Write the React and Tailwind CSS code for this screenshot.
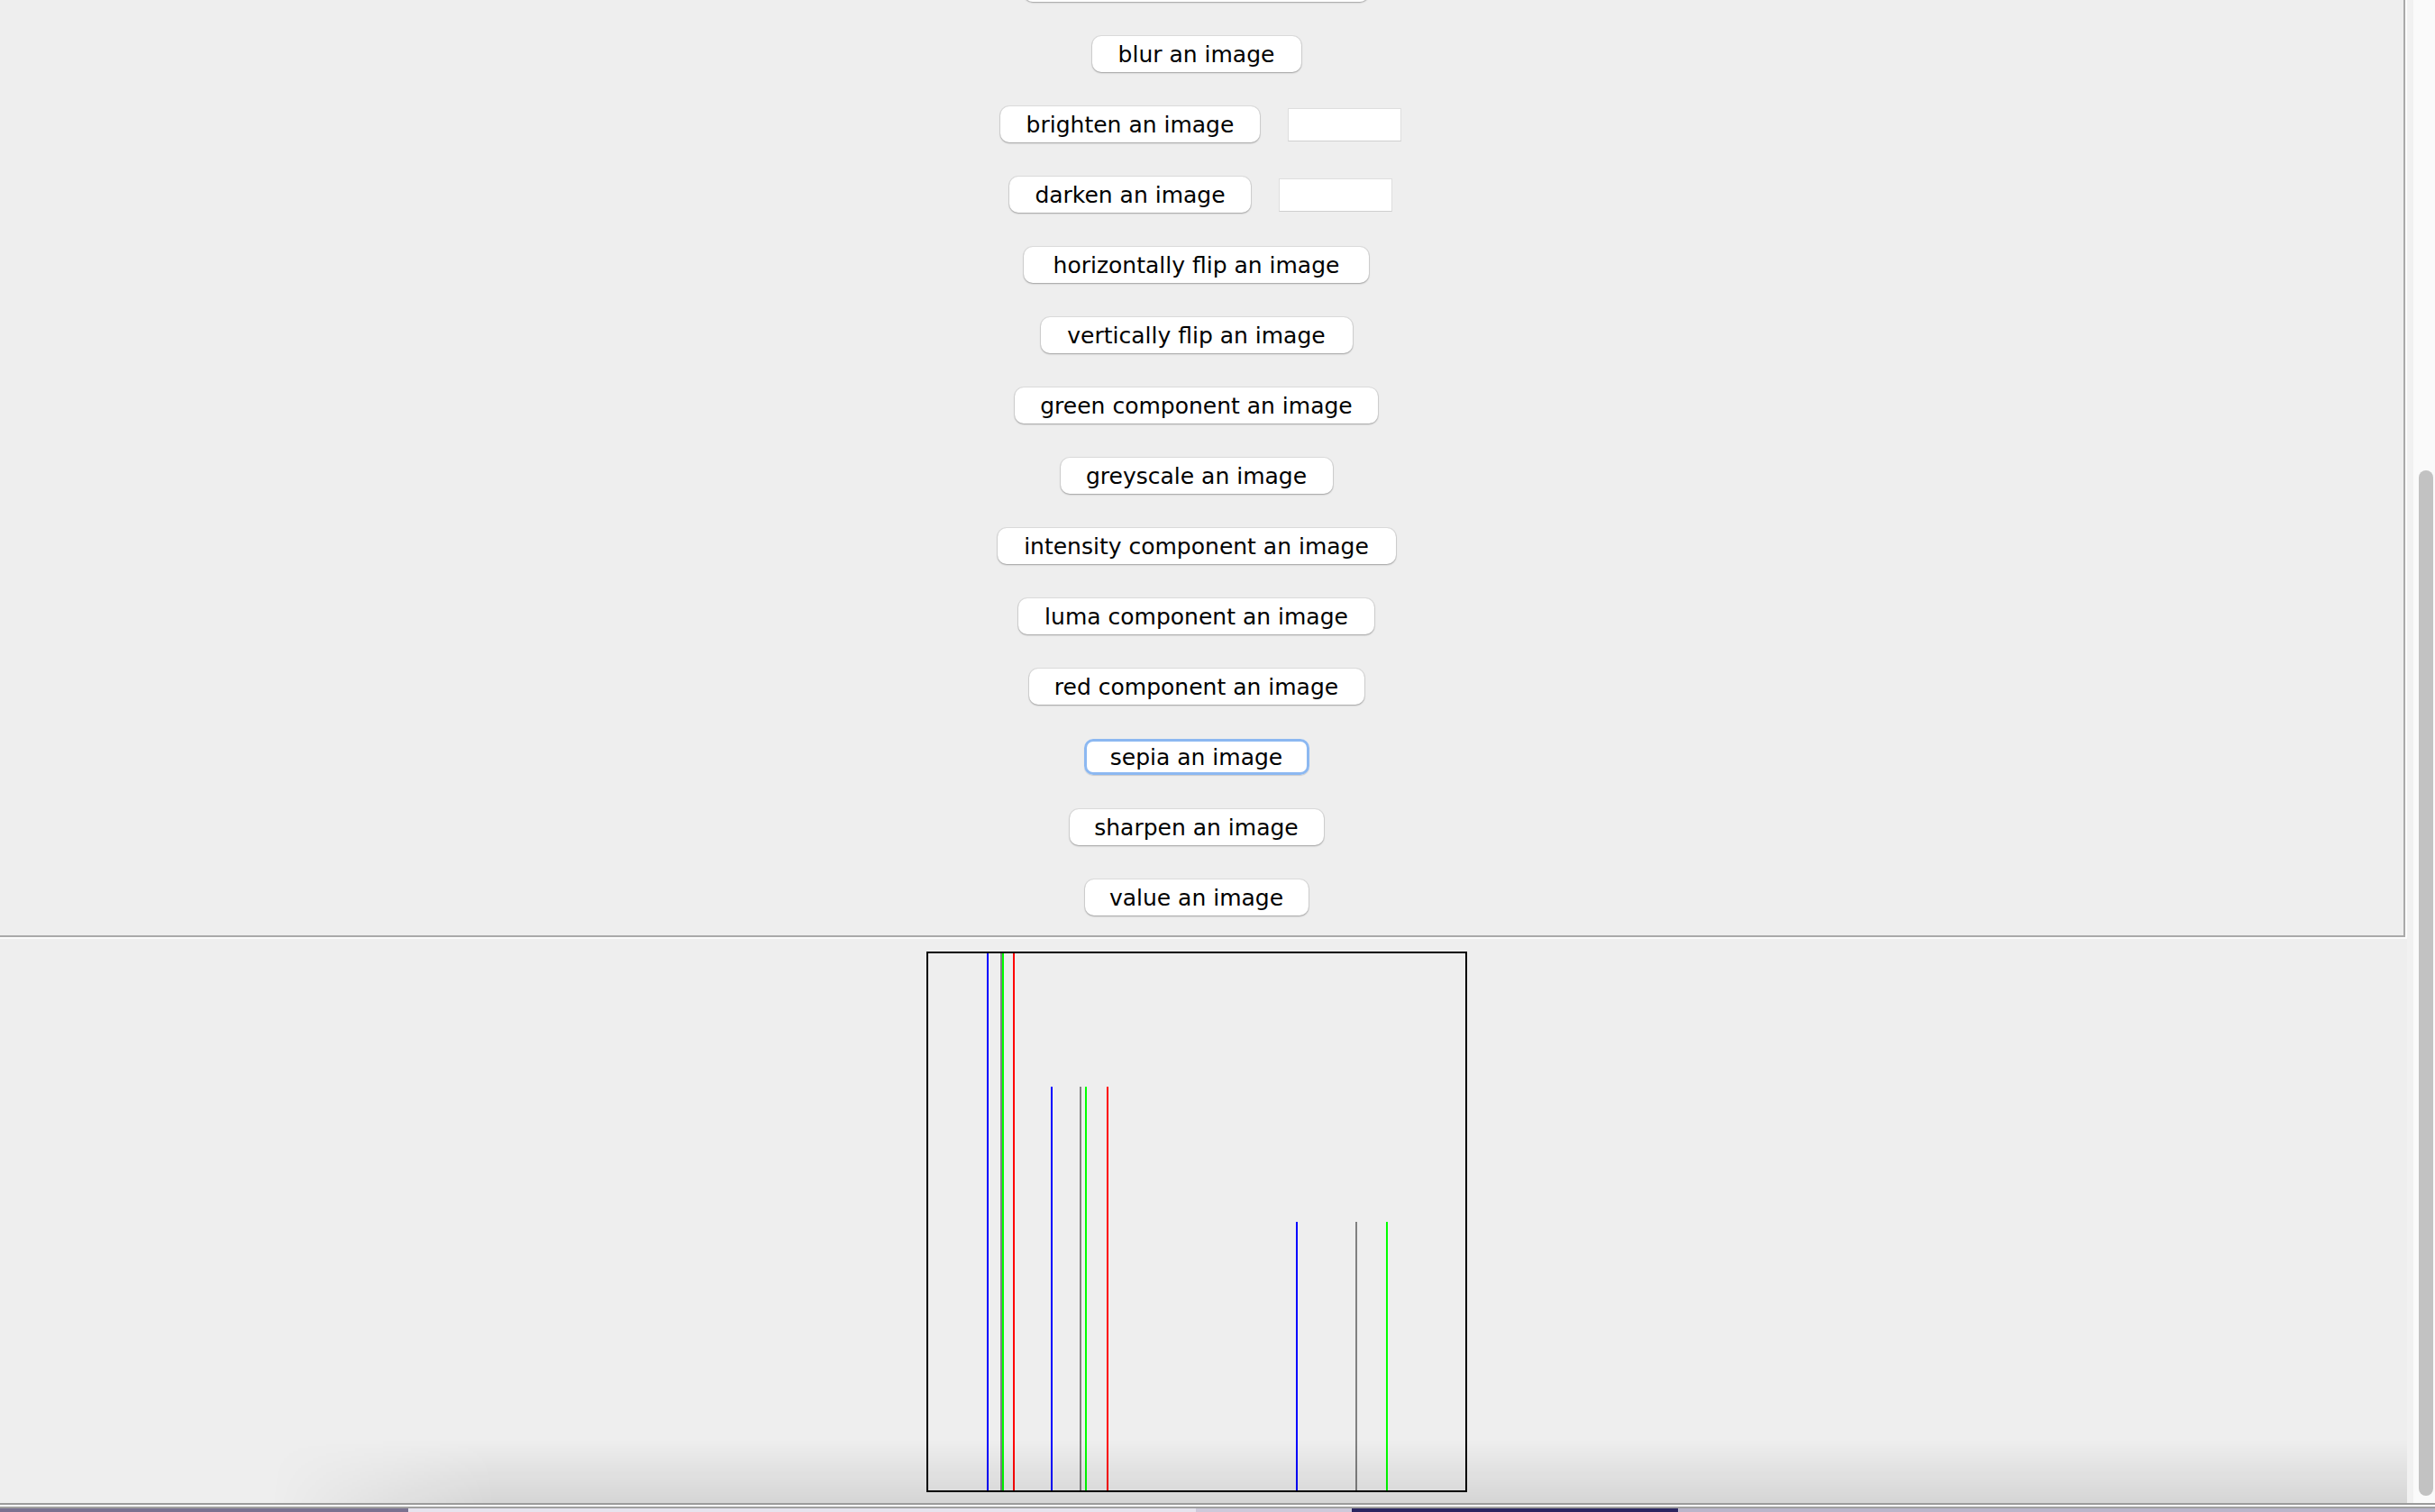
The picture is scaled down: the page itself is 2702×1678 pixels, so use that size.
import React from "react";

// Filter buttons, in the order they appear in the scroll pane.
// The first one sits above the visible area (scrolled off).
const FILTERS = [
  { label: "load an image", w: "w-[383px]" },
  { label: "blur an image", w: "w-[232px]" },
  { label: "brighten an image", w: "w-[288px]", field: true },
  { label: "darken an image", w: "w-[268px]", field: true },
  { label: "horizontally flip an image", w: "w-[383px]" },
  { label: "vertically flip an image", w: "w-[346px]" },
  { label: "green component an image", w: "w-[403px]" },
  { label: "greyscale an image", w: "w-[302px]" },
  { label: "intensity component an image", w: "w-[442px]" },
  { label: "luma component an image", w: "w-[395px]" },
  { label: "red component an image", w: "w-[372px]" },
  { label: "sepia an image", w: "w-[250px]", focused: true },
  { label: "sharpen an image", w: "w-[282px]" },
  { label: "value an image", w: "w-[248px]" },
];

// histogram lines: x inside the plot, top offset, colour
const BARS = [
  { x: 65, top: 0, c: "#0000ff" },
  { x: 80, top: 0, c: "#808080" },
  { x: 82, top: 0, c: "#00ff00" },
  { x: 94, top: 0, c: "#ff0000" },
  { x: 136, top: 148, c: "#0000ff" },
  { x: 168, top: 148, c: "#808080" },
  { x: 174, top: 148, c: "#00ff00" },
  { x: 198, top: 148, c: "#ff0000" },
  { x: 408, top: 298, c: "#0000ff" },
  { x: 474, top: 298, c: "#808080" },
  { x: 508, top: 298, c: "#00ff00" },
];

function AquaButton({ label, w, focused }) {
  return (
    <button
      className={`${w} h-[40px] shrink-0 rounded-[10px] bg-white text-[25px] leading-none text-black ${
        focused
          ? "shadow-[inset_0_0_0_3px_#8cb8f1,0_1px_1px_rgba(0,0,0,0.15)]"
          : "shadow-[0_0_0_1px_rgba(0,0,0,0.07),0_1px_2px_rgba(0,0,0,0.28)]"
      }`}
    >
      {label}
    </button>
  );
}

function Histogram() {
  return (
    <div className="w-[600px] h-[600px] border-2 border-black">
      <svg width="596" height="596" viewBox="0 0 596 596">
        {BARS.map((b, i) => (
          <rect key={i} x={b.x} y={b.top} width="2" height={596 - b.top} fill={b.c} />
        ))}
      </svg>
    </div>
  );
}

export default function App() {
  return (
    <div
      className="w-[2702px] h-[1678px] overflow-hidden bg-[#eeeeee] flex flex-col"
      style={{ fontFamily: '"DejaVu Sans", "Liberation Sans", sans-serif' }}
    >
      <div className="relative flex h-[1668px]">
        <div className="w-[2671px] flex flex-col">
          {/* buttons panel, etched border on the right and bottom */}
          <div className="border-r-2 border-b-2 border-[#fbfbfb]">
            <div className="h-[1040px] overflow-hidden border-r-2 border-b-2 border-[#a9a9a9]">
              <div className="-mt-[38px] pr-[12px] flex flex-col items-center gap-[38px]">
                {FILTERS.map((f) =>
                  f.field ? (
                    <div key={f.label} className="flex items-center pl-[10px]">
                      <AquaButton {...f} />
                      <div className="ml-[31px] w-[126px] h-[37px] bg-white border border-[#dedede] border-b-[#cfcfcf]" />
                    </div>
                  ) : (
                    <AquaButton key={f.label} {...f} />
                  )
                )}
              </div>
            </div>
          </div>

          <div className="mt-[14px] pr-[15px] flex justify-center">
            <Histogram />
          </div>
        </div>

        {/* vertical scroll bar */}
        <div className="w-[31px] flex">
          <div className="w-[7px] bg-[#f1f1f1]" />
          <div className="flex-1 bg-[#fafafa] pl-[6px]">
            <div className="mt-[522px] w-[16px] h-[1138px] rounded-full bg-[#c2c2c2]" />
          </div>
        </div>

        {/* shadow of the window underneath */}
        <div className="pointer-events-none absolute bottom-0 left-[300px] right-[31px] h-[70px] bg-[linear-gradient(to_bottom,rgba(0,0,0,0),rgba(0,0,0,0.1))] [mask-image:linear-gradient(to_right,transparent,black_250px)]" />
      </div>

      {/* window edge and desktop below */}
      <div className="h-[10px] flex flex-col">
        <div className="h-[2px] bg-[#9b9b9b]" />
        <div className="h-[2px] bg-[#f5f5f5]" />
        <div className="h-[2px] bg-[#a0a0a0]" />
        <div className="h-[4px] flex">
          <div className="w-[453px] bg-[#7a7290]" />
          <div className="w-[874px] bg-[#e6e4ee]" />
          <div className="w-[173px] bg-[#cdc9da]" />
          <div className="w-[362px] bg-[#2b2660]" />
          <div className="flex-1 bg-[#b9b5ca]" />
        </div>
      </div>
    </div>
  );
}
